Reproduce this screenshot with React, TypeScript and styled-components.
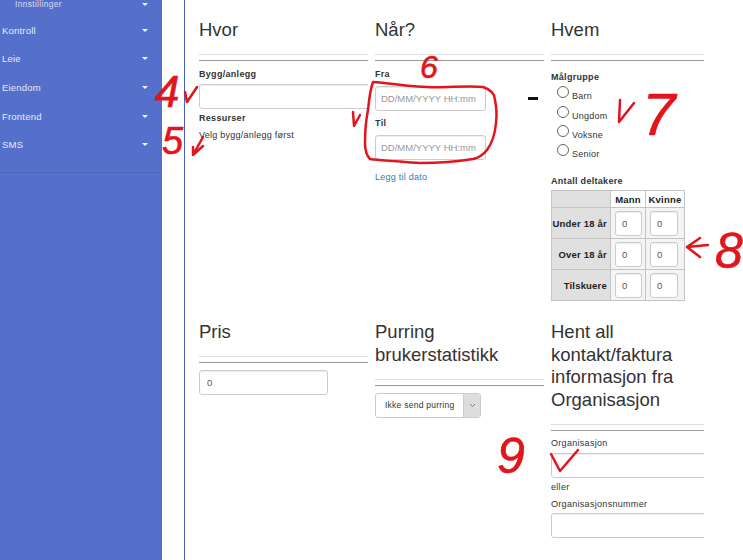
import styled, { createGlobalStyle } from 'styled-components'

const menuItems = ['Kontroll', 'Leie', 'Eiendom', 'Frontend', 'SMS']
const groups = ['Barn', 'Ungdom', 'Voksne', 'Senior']
const ageRows = ['Under 18 år', 'Over 18 år', 'Tilskuere']

const GlobalStyle = createGlobalStyle`
  html, body {
    margin: 0;
    height: 560px;
    overflow: hidden;
    background: #fff;
    font-family: 'Liberation Sans', Arial, sans-serif;
    color: #333;
  }
`

const Page = styled.div`
  position: relative;
  display: flex;
  width: 743px;
  height: 560px;
  overflow: hidden;
`

const Sidebar = styled.nav`
  flex: 0 0 162px;
  height: 560px;
  background: #5570cb;
  overflow: hidden;
`

const SubItem = styled.div`
  display: flex;
  justify-content: space-between;
  align-items: center;
  height: 8px;
  padding: 0 14px 0 15px;
  font-size: 8.5px;
  line-height: 8px;
  letter-spacing: 0.3px;
  color: #d5dcf4;
`

const MenuItem = styled.div`
  display: flex;
  justify-content: space-between;
  align-items: center;
  height: 28.6px;
  padding: 0 14px 0 2px;
  font-size: 9.5px;
  letter-spacing: 0.2px;
  color: #e6eaf9;
`

const MenuList = styled.div`
  margin-top: 8px;
  padding-bottom: 13px;
  border-bottom: 1px solid #4e67bd;
`

const Caret = styled.span`
  width: 0;
  height: 0;
  border-left: 3px solid transparent;
  border-right: 3px solid transparent;
  border-top: 3px solid #f2f4fc;
`

const Main = styled.main`
  flex: 0 0 520px;
  margin-left: 22px;
  padding: 19px 0 0 14px;
  border-left: 1px solid #4a62b5;
  box-sizing: border-box;
  width: 520px;
  height: 560px;
  overflow: hidden;
`

const Columns = styled.div`
  display: grid;
  grid-template-columns: 169px 169px 153px;
  grid-template-rows: 302px auto;
  column-gap: 7px;
  width: 505px;
`

const Column = styled.section`
  min-width: 0;
  overflow: hidden;
`

const Heading = styled.h3`
  margin: 0 0 12.5px;
  font-size: 18.5px;
  font-weight: 400;
  line-height: 22.7px;
  color: #333;
`

const Rules = styled.div`
  height: 5px;
  margin-bottom: 7px;
  border-top: 1px solid #ddd;
  border-bottom: 1px solid #9a9a9a;
`

const Label = styled.label<{ $mt?: number; $mb?: number; $plain?: boolean }>`
  display: block;
  height: 12px;
  margin-top: ${(p) => p.$mt ?? 0}px;
  margin-bottom: ${(p) => p.$mb ?? 0}px;
  font-size: 9px;
  font-weight: ${(p) => (p.$plain ? 400 : 700)};
  line-height: 12px;
  letter-spacing: 0.3px;
  color: #333;
`

const Help = styled.div`
  margin-top: 5px;
  font-size: 9px;
  line-height: 12px;
  letter-spacing: 0.25px;
  color: #333;
`

const Input = styled.input<{ $width: number; $pad?: number }>`
  display: block;
  box-sizing: border-box;
  width: ${(p) => p.$width}px;
  height: 24.5px;
  padding: 0 ${(p) => p.$pad ?? 7}px;
  border: 1px solid #ccc;
  border-radius: 3px;
  background: #fff;
  box-shadow: inset 0 1px 1px rgba(0, 0, 0, 0.075);
  font-family: inherit;
  font-size: 9.5px;
  color: #555;
  &::placeholder {
    color: #999;
    opacity: 1;
  }
`

const DateLink = styled.a`
  display: block;
  margin-top: 11px;
  font-size: 9px;
  line-height: 12px;
  letter-spacing: 0.25px;
  color: #337ab7;
`

const Dash = styled.span`
  position: absolute;
  left: 528px;
  top: 97px;
  width: 10px;
  height: 3px;
  background: #111;
`

const RadioGroup = styled.div`
  margin: 3px 0 0 6px;
`

const RadioRow = styled.label`
  display: flex;
  align-items: flex-start;
  gap: 3px;
  height: 19.3px;
  font-size: 9px;
  letter-spacing: 0.25px;
  color: #333;
`

const Radio = styled.input`
  appearance: none;
  flex: none;
  width: 12px;
  height: 12px;
  margin: 0;
  border: 1px solid #666;
  border-radius: 50%;
  background: #fff;
`

const RadioText = styled.span`
  margin-top: 4px;
  line-height: 12px;
`

const Counts = styled.table`
  width: 133px;
  table-layout: fixed;
  border-collapse: collapse;
  border: 1px solid #999;
  font-size: 9.5px;
  letter-spacing: 0.2px;
`

const HeadCell = styled.th<{ $filled?: boolean }>`
  height: 16px;
  padding: 0;
  border: 1px solid #c4c4c4;
  background: ${(p) => (p.$filled ? '#e0e0e0' : '#fff')};
  color: #222;
  text-align: center;
`

const RowHead = styled.th`
  height: 30px;
  padding: 0 3px 0 0;
  border: 1px solid #c4c4c4;
  background: #e0e0e0;
  color: #222;
  text-align: right;
`

const CountCell = styled.td`
  height: 30px;
  padding: 0 0 0 4px;
  border: 1px solid #c4c4c4;
  background: #f4f4f4;
  line-height: 0;
  text-align: left;
`

const CountInput = styled(Input)`
  display: block;
  height: 25px;
  padding: 0 0 0 6px;
`

const SelectBox = styled.div`
  display: flex;
  box-sizing: border-box;
  width: 106px;
  height: 25px;
  border: 1px solid #ccc;
  border-radius: 3px;
  overflow: hidden;
  font-size: 8.5px;
  letter-spacing: 0.25px;
  color: #333;
`

const SelectText = styled.span`
  flex: 1;
  padding-left: 9px;
  line-height: 23px;
`

const SelectArrow = styled.span`
  display: flex;
  align-items: center;
  justify-content: center;
  width: 16px;
  background: #ddd;
  border-left: 1px solid #ccc;
`

const Annotations = styled.svg`
  position: absolute;
  left: 0;
  top: 0;
  pointer-events: none;
`

const Scribble = styled.path`
  fill: none;
  stroke: #e2141c;
  stroke-width: 2.5px;
  stroke-linecap: round;
  stroke-linejoin: round;
`

const Digit = styled.text<{ $size: number }>`
  fill: #e2141c;
  stroke: #e2141c;
  stroke-width: 0.6px;
  font-family: 'Liberation Sans', Arial, sans-serif;
  font-size: ${(p) => p.$size}px;
  font-style: italic;
`

export default function App() {
  return (
    <Page>
      <GlobalStyle />
      <Sidebar>
        <SubItem>
          Innstillinger
          <Caret />
        </SubItem>
        <MenuList>
          {menuItems.map((item) => (
            <MenuItem key={item}>
              {item}
              <Caret />
            </MenuItem>
          ))}
        </MenuList>
      </Sidebar>
      <Main>
        <Columns>
          <Column>
            <Heading>Hvor</Heading>
            <Rules />
            <Label $mb={4}>Bygg/anlegg</Label>
            <Input $width={200} />
            <Label $mt={3}>Ressurser</Label>
            <Help>Velg bygg/anlegg først</Help>
          </Column>
          <Column>
            <Heading>Når?</Heading>
            <Rules />
            <Label $mb={6}>Fra</Label>
            <Input $width={111} $pad={5} placeholder="DD/MM/YYYY HH:mm" />
            <Label $mt={6} $mb={6.5}>
              Til
            </Label>
            <Input $width={111} $pad={5} placeholder="DD/MM/YYYY HH:mm" />
            <DateLink>Legg til dato</DateLink>
          </Column>
          <Column>
            <Heading>Hvem</Heading>
            <Rules />
            <Label $mt={10}>Målgruppe</Label>
            <RadioGroup>
              {groups.map((group) => (
                <RadioRow key={group}>
                  <Radio type="radio" name="malgruppe" />
                  <RadioText>{group}</RadioText>
                </RadioRow>
              ))}
            </RadioGroup>
            <Label $mt={12} $mb={3}>
              Antall deltakere
            </Label>
            <Counts>
              <colgroup>
                <col width="59" />
                <col width="35" />
                <col width="39" />
              </colgroup>
              <thead>
                <tr>
                  <HeadCell $filled />
                  <HeadCell>Mann</HeadCell>
                  <HeadCell>Kvinne</HeadCell>
                </tr>
              </thead>
              <tbody>
                {ageRows.map((row) => (
                  <tr key={row}>
                    <RowHead>{row}</RowHead>
                    <CountCell>
                      <CountInput $width={27} defaultValue="0" />
                    </CountCell>
                    <CountCell>
                      <CountInput $width={28} defaultValue="0" />
                    </CountCell>
                  </tr>
                ))}
              </tbody>
            </Counts>
          </Column>
          <Column>
            <Heading>Pris</Heading>
            <Rules />
            <Input $width={129} defaultValue="0" />
          </Column>
          <Column>
            <Heading>
              Purring
              <br />
              brukerstatistikk
            </Heading>
            <Rules />
            <SelectBox>
              <SelectText>Ikke send purring</SelectText>
              <SelectArrow>
                <svg width="7" height="5" viewBox="0 0 7 5">
                  <path d="M1 1l2.5 2.5L6 1" fill="none" stroke="#666" strokeWidth="0.8" />
                </svg>
              </SelectArrow>
            </SelectBox>
          </Column>
          <Column>
            <Heading>
              Hent all
              <br />
              kontakt/faktura
              <br />
              informasjon fra
              <br />
              Organisasjon
            </Heading>
            <Rules />
            <Label $plain $mt={-1.5} $mb={4.5}>
              Organisasjon
            </Label>
            <Input $width={200} />
            <Label $plain $mt={3.5}>
              eller
            </Label>
            <Label $plain $mt={5} $mb={3}>
              Organisasjonsnummer
            </Label>
            <Input $width={200} />
          </Column>
        </Columns>
      </Main>
      <Dash />
      <Annotations width="743" height="560" viewBox="0 0 743 560">
        <Digit x="155" y="107" $size={44}>4</Digit>
        <Digit x="162" y="154" $size={38}>5</Digit>
        <Digit x="420" y="78" $size={32}>6</Digit>
        <Digit x="642" y="135" $size={60}>7</Digit>
        <Digit x="715" y="268" $size={50}>8</Digit>
        <Digit x="497" y="473" $size={50}>9</Digit>
        <Scribble d="M185 92L187 102L197 87" />
        <Scribble d="M353 112L354 126L360 115" />
        <Scribble d="M203 137L193 155M193 147L193 155L203 146" />
        <Scribble d="M373 82C390 83 410 87 427 87C445 88 470 85 483 87C492 90 495 95 495 100C497 110 497 115 496 123C495 135 492 143 487 150C483 155 478 158 473 159C455 162 438 163 420 163C405 162 385 161 370 159C366 155 365 150 365 143C365 130 366 120 368 110C369 100 370 90 373 82Z" />
        <Scribble d="M620 100L619 122L634 103" />
        <Scribble d="M708 245L687 247M700 238L687 247L700 257" />
        <Scribble d="M551 454L560 471L578 450" />
      </Annotations>
    </Page>
  )
}
